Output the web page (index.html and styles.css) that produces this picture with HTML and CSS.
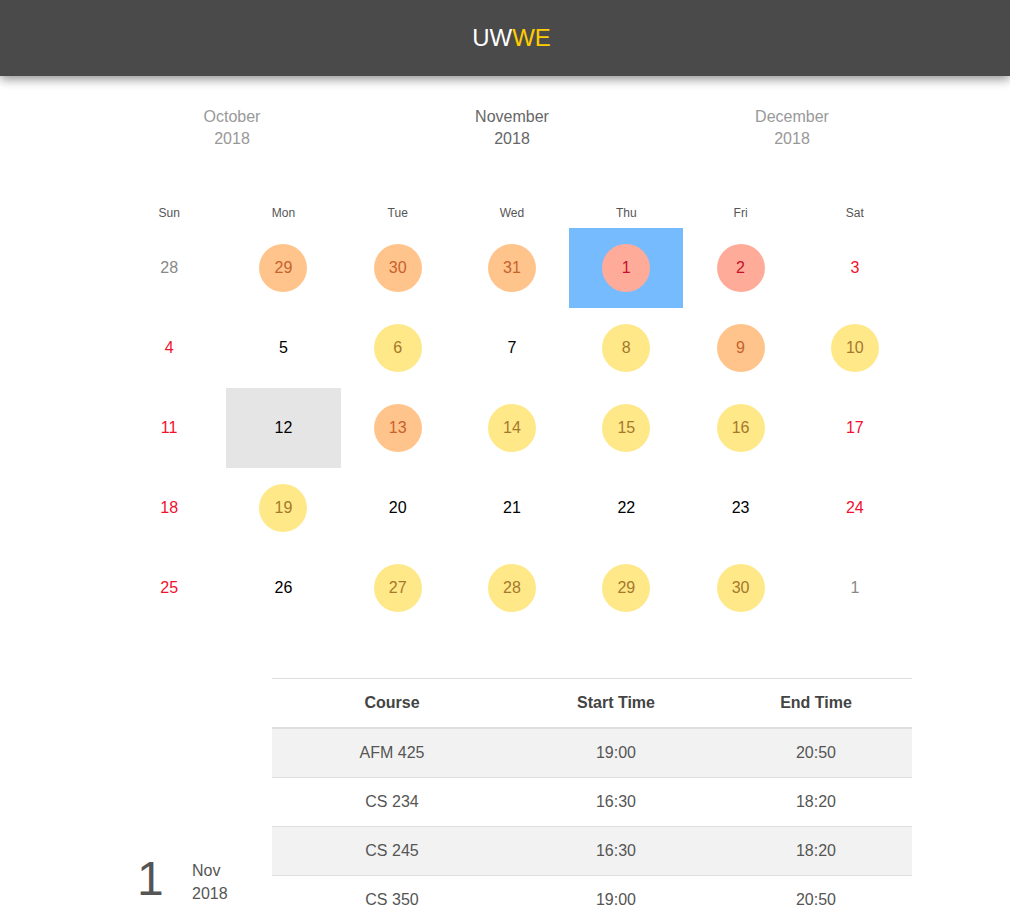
FILE: index.html
```html
<!DOCTYPE html>
<html>
<head>
<meta charset="utf-8">
<title>UWWE</title>
<link rel="stylesheet" href="styles.css">
</head>
<body>
<header class="topbar">
  <h1 class="brand"><span class="brand-uw">UW</span><span class="brand-we">WE</span></h1>
</header>
<main class="main">
  <div class="months">
    <div class="month month-side">October<br>2018</div>
    <div class="month month-current">November<br>2018</div>
    <div class="month month-side">December<br>2018</div>
  </div>
  <div class="calendar">
    <div class="wd">Sun</div><div class="wd">Mon</div><div class="wd">Tue</div><div class="wd">Wed</div><div class="wd">Thu</div><div class="wd">Fri</div><div class="wd">Sat</div>

    <div class="day other">28</div>
    <div class="day"><span class="dot orange">29</span></div>
    <div class="day"><span class="dot orange">30</span></div>
    <div class="day"><span class="dot orange">31</span></div>
    <div class="day selected"><span class="dot salmon">1</span></div>
    <div class="day"><span class="dot salmon">2</span></div>
    <div class="day weekend">3</div>

    <div class="day weekend">4</div>
    <div class="day">5</div>
    <div class="day"><span class="dot yellow">6</span></div>
    <div class="day">7</div>
    <div class="day"><span class="dot yellow">8</span></div>
    <div class="day"><span class="dot orange">9</span></div>
    <div class="day"><span class="dot yellow">10</span></div>

    <div class="day weekend">11</div>
    <div class="day today">12</div>
    <div class="day"><span class="dot orange">13</span></div>
    <div class="day"><span class="dot yellow">14</span></div>
    <div class="day"><span class="dot yellow">15</span></div>
    <div class="day"><span class="dot yellow">16</span></div>
    <div class="day weekend">17</div>

    <div class="day weekend">18</div>
    <div class="day"><span class="dot yellow">19</span></div>
    <div class="day">20</div>
    <div class="day">21</div>
    <div class="day">22</div>
    <div class="day">23</div>
    <div class="day weekend">24</div>

    <div class="day weekend">25</div>
    <div class="day">26</div>
    <div class="day"><span class="dot yellow">27</span></div>
    <div class="day"><span class="dot yellow">28</span></div>
    <div class="day"><span class="dot yellow">29</span></div>
    <div class="day"><span class="dot yellow">30</span></div>
    <div class="day other">1</div>
  </div>

  <section class="details">
    <div class="date-block">
      <div class="date-num">1</div>
      <div class="date-my">Nov<br>2018</div>
    </div>
    <table class="courses">
      <thead>
        <tr><th class="c1">Course</th><th class="c2">Start Time</th><th class="c3">End Time</th></tr>
      </thead>
      <tbody>
        <tr class="striped"><td>AFM 425</td><td>19:00</td><td>20:50</td></tr>
        <tr><td>CS 234</td><td>16:30</td><td>18:20</td></tr>
        <tr class="striped"><td>CS 245</td><td>16:30</td><td>18:20</td></tr>
        <tr><td>CS 350</td><td>19:00</td><td>20:50</td></tr>
      </tbody>
    </table>
  </section>
</main>
</body>
</html>
```
FILE: styles.css
```css
* { box-sizing: border-box; }
html, body { margin: 0; padding: 0; background: #fff; }
body {
  font-family: "Liberation Sans", Arial, sans-serif;
  color: #333;
  overflow: hidden;
}
.topbar {
  height: 76px;
  background: #4a4a4a;
  box-shadow: 0 3px 10px rgba(0, 0, 0, 0.45);
  position: relative;
  z-index: 2;
  padding-left: 13px;
}
.brand {
  margin: 0;
  text-align: center;
  font-size: 24px;
  font-weight: normal;
  line-height: 76px;
}
.brand-uw { color: #ffffff; }
.brand-we { color: #ffcc00; }

.main {
  width: 800px;
  margin-left: 112px;
  padding-top: 30px;
}
.months {
  display: grid;
  grid-template-columns: repeat(3, 1fr);
  margin: 0 -20px;
}
.month {
  text-align: center;
  font-size: 16px;
  line-height: 22px;
}
.month-side { color: #999; }
.month-current { color: #666; }

.calendar {
  margin-top: 54px;
  display: grid;
  grid-template-columns: repeat(7, 1fr);
  grid-template-rows: 24px;
  grid-auto-rows: 80px;
}
.wd {
  font-size: 12px;
  line-height: 18px;
  height: 24px;
  color: #555;
  text-align: center;
}
.day {
  display: flex;
  align-items: center;
  justify-content: center;
  font-size: 16px;
  color: #000;
}
.day.other { color: #888; }
.day.weekend { color: #f2102e; }
.day.selected { background: #77bbff; }
.day.today { background: #e5e5e5; }
.dot {
  width: 48px;
  height: 48px;
  border-radius: 50%;
  display: flex;
  align-items: center;
  justify-content: center;
}
.dot.orange { background: #ffc48b; color: #c5622e; }
.dot.salmon { background: #ffab99; color: #c4102c; }
.dot.yellow { background: #ffe888; color: #a5782c; }

.details {
  margin-top: 50px;
  display: flex;
  align-items: flex-start;
}
.date-block {
  width: 160px;
  padding-left: 25px;
  margin-top: 181px;
  display: flex;
  align-items: flex-start;
  color: #555;
}
.date-num {
  font-size: 48px;
  line-height: 39px;
  width: 55px;
}
.date-my {
  font-size: 16px;
  line-height: 23px;
}
.courses {
  width: 640px;
  border-collapse: collapse;
  font-size: 16px;
}
.courses th, .courses td {
  text-align: center;
  padding: 12px 8px;
  line-height: 24px;
}
.courses th {
  color: #444;
  font-weight: bold;
  border-top: 1px solid #dedee2;
  border-bottom: 2px solid #dedee2;
}
.courses td {
  color: #555;
  border-top: 1px solid #dedee2;
}
.c1 { width: 240px; }
.c2 { width: 208px; }
.c3 { width: 192px; }
.striped { background: #f2f2f2; }
```
